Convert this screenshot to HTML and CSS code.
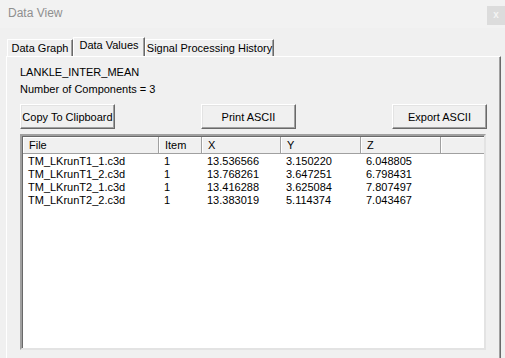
FILE: index.html
```html
<!DOCTYPE html>
<html>
<head>
  <title>Data View</title>
  <link rel="stylesheet" href="styles.css">
</head>
<body>
  <div class="titlebar">
    <span class="title">Data View</span>
    <span class="close">x</span>
  </div>

  <div class="tabs">
    <div class="tab graph">Data Graph</div>
    <div class="tab values active">Data Values</div>
    <div class="tab history">Signal Processing History</div>
  </div>

  <div class="panel">
    <div class="name">LANKLE_INTER_MEAN</div>
    <div class="count">Number of Components = 3</div>

    <div class="actions">
      <button class="btn">Copy To Clipboard</button>
      <button class="btn print">Print ASCII</button>
      <button class="btn export">Export ASCII</button>
    </div>

    <div class="list">
      <div class="row head">
        <div class="cell">File</div>
        <div class="cell">Item</div>
        <div class="cell">X</div>
        <div class="cell">Y</div>
        <div class="cell">Z</div>
        <div class="cell"></div>
      </div>
      <div class="row">
        <div class="cell">TM_LKrunT1_1.c3d</div>
        <div class="cell">1</div>
        <div class="cell">13.536566</div>
        <div class="cell">3.150220</div>
        <div class="cell">6.048805</div>
        <div class="cell"></div>
      </div>
      <div class="row">
        <div class="cell">TM_LKrunT1_2.c3d</div>
        <div class="cell">1</div>
        <div class="cell">13.768261</div>
        <div class="cell">3.647251</div>
        <div class="cell">6.798431</div>
        <div class="cell"></div>
      </div>
      <div class="row">
        <div class="cell">TM_LKrunT2_1.c3d</div>
        <div class="cell">1</div>
        <div class="cell">13.416288</div>
        <div class="cell">3.625084</div>
        <div class="cell">7.807497</div>
        <div class="cell"></div>
      </div>
      <div class="row">
        <div class="cell">TM_LKrunT2_2.c3d</div>
        <div class="cell">1</div>
        <div class="cell">13.383019</div>
        <div class="cell">5.114374</div>
        <div class="cell">7.043467</div>
        <div class="cell"></div>
      </div>
    </div>
  </div>
</body>
</html>
```

FILE: styles.css
```css
body {
  margin: 0;
  background-color: #f0f0f0;
  font-family: "Liberation Sans", Arial, sans-serif;
  font-size: 11px;
  color: #000;
  overflow: hidden;
  height: 358px;
}

.titlebar {
  height: 28px;
  background-color: #f2f2f2;
  display: flex;
  align-items: flex-start;
  justify-content: space-between;
}

.title {
  margin: 6px 0 0 8px;
  font-size: 12px;
  line-height: 14px;
  color: #8f8f8f;
}

.close {
  margin-top: 6px;
  width: 18px;
  height: 19px;
  background-color: #dcdcdc;
  color: #f4f4f4;
  font-size: 10px;
  font-weight: bold;
  line-height: 18px;
  text-align: center;
}

.tabs {
  margin-top: 9px;
  height: 19px;
  padding-left: 7px;
  display: flex;
  align-items: flex-end;
}

.tab {
  box-sizing: border-box;
  height: 17px;
  line-height: 17px;
  text-align: center;
  white-space: nowrap;
  border-top: 1px solid #fff;
  border-left: 1px solid #fff;
  border-right: 1px solid #696969;
  box-shadow: inset -1px 0 #a0a0a0;
}

.tab.graph {
  width: 66px;
}

.tab.values {
  width: 72px;
}

.tab.history {
  width: 129px;
}

.tab.active {
  height: 19px;
  line-height: 15px;
  position: relative;
  z-index: 1;
  background-color: #f0f0f0;
}

.panel {
  margin: 0 4px 0 6px;
  height: 292px;
  padding: 9px 0 0 13px;
  border-top: 1px solid #fff;
  border-left: 1px solid #fff;
  border-right: 1px solid #696969;
  box-shadow: inset -1px 0 #a0a0a0;
}

.name,
.count {
  line-height: 13px;
}

.count {
  margin-top: 4px;
}

.actions {
  margin-top: 8px;
  width: 467px;
  height: 25px;
  display: flex;
}

.btn {
  width: 95px;
  height: 25px;
  padding: 0;
  font-family: inherit;
  font-size: 11px;
  color: #000;
  background-color: #f0f0f0;
  border: 1px solid;
  border-color: #fff #696969 #696969 #fff;
  box-shadow: inset -1px -1px #a0a0a0, inset 1px 1px #e3e3e3;
}

.btn.print {
  margin-left: 86px;
}

.btn.export {
  margin-left: auto;
}

.list {
  margin-top: 5px;
  width: 462px;
  height: 212px;
  background-color: #fff;
  border: 2px solid;
  border-color: #a0a0a0 #e3e3e3 #e3e3e3 #a0a0a0;
  box-shadow: inset 1px 1px #696969;
}

.row {
  display: grid;
  grid-template-columns: 136px 43px 79px 80px 80px 1fr;
  height: 13px;
  line-height: 13px;
}

.row .cell {
  padding-left: 6px;
  white-space: nowrap;
  overflow: hidden;
}

.row.head {
  height: 17px;
  margin-left: 1px;
  margin-top: 1px;
  margin-bottom: 1px;
}

.row.head .cell {
  line-height: 16px;
  background-color: #f0f0f0;
  border-right: 1px solid #a0a0a0;
  border-bottom: 1px solid #a0a0a0;
  box-shadow: inset 1px 1px #fff;
}

.row.head .cell:last-child {
  border-right: 0;
}
```
